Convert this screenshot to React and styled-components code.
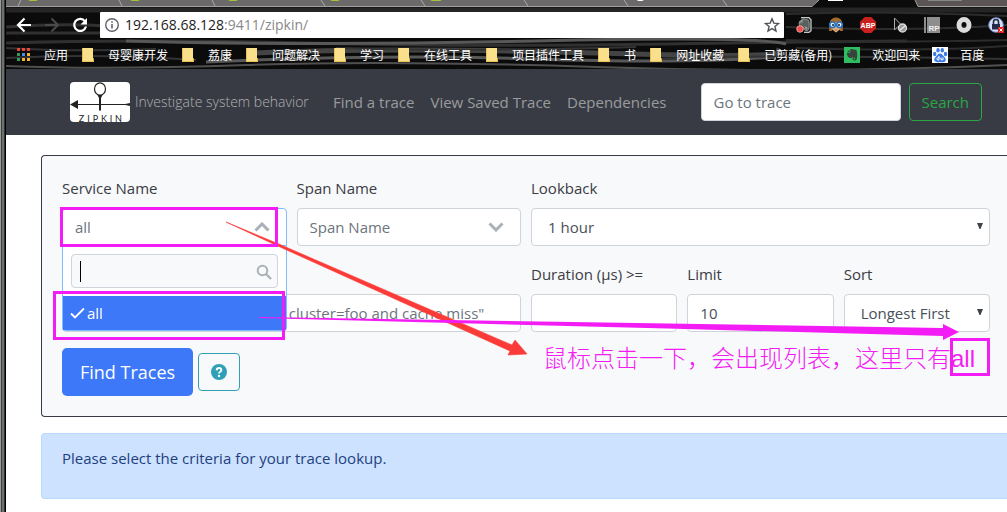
import React from "react";
import styled, { createGlobalStyle, css } from "styled-components";

const GlobalStyle = createGlobalStyle`
  *, *::before, *::after { box-sizing: border-box; }
  body {
    margin: 0;
    background: #fff;
    color: #3a3c44;
    font: 15px/24px "Open Sans", "Noto Sans", "Noto Sans CJK SC", sans-serif;
    overflow-x: hidden;
  }
  button, input, select { font: inherit; color: inherit; margin: 0; }
`;

const Frame = styled.div`
  position: relative;
  min-height: 100vh;
  padding-left: 6px;
  background: linear-gradient(to right, #9a9c9a 0 1px, #3c403e 1px 2px, #6d706e 2px 4px, #333 4px 5px, #000 5px 6px) left / 6px 100% no-repeat, #fff;
  overflow: hidden;
`;

/* ---------- browser chrome ---------- */

const Chrome = styled.header`
  position: relative;
  isolation: isolate;
  background: #0b0b0b;
  color: #fff;
`;

const Grain = styled.svg`
  position: absolute;
  inset: 0;
  width: 100%;
  height: 100%;
  z-index: -1;
`;

const TabStrip = styled.div`
  height: 7px;
`;

const Toolbar = styled.div`
  display: flex;
  align-items: center;
  height: 35px;
  padding: 0 3px 0 10px;
  gap: 12px;
`;

const IconButton = styled.button`
  display: flex;
  width: 16px;
  height: 16px;
  flex: none;
  padding: 0;
  border: 0;
  background: none;
  color: ${(p) => (p.disabled ? "#4a4a4a" : "#fff")};
  svg { width: 16px; height: 16px; overflow: visible; }
`;

const AddressBar = styled.div`
  display: flex;
  align-items: center;
  flex: 1;
  height: 26px;
  padding: 0 4px;
  gap: 5px;
  background: #fff;
  color: #888;
  font-size: 14px;
  border-radius: 1px;
  span { flex: 1; }
  b { font-weight: 400; color: #222; }
  svg { width: 16px; height: 16px; flex: none; }
`;

const Extensions = styled.div`
  display: flex;
  gap: 16px;
`;

const Bookmarks = styled.nav`
  display: flex;
  align-items: center;
  height: 27px;
  padding: 0 0 2px 10px;
  gap: 12px;
  white-space: nowrap;
`;

const Bookmark = styled.a`
  display: flex;
  align-items: center;
  gap: 12px;
  color: #fff;
  font: 12px/16px "Noto Sans CJK SC", sans-serif;
  text-decoration: none;
  svg { width: 16px; height: 16px; }
`;

/* ---------- zipkin navbar ---------- */

const Navbar = styled.nav`
  display: flex;
  align-items: center;
  height: 66px;
  padding: 0 25px 0 64px;
  background: #393b44;
  color: #9a9b9f;
  white-space: nowrap;
`;

const Logo = styled.svg`
  width: 60px;
  height: 40px;
  flex: none;
  border-radius: 4px;
  background: #fff;
`;

const Tagline = styled.span`
  width: 203px;
  padding-left: 5px;
  color: #b0b1b5;
  font-size: 14px;
  font-weight: 300;
`;

const NavLinks = styled.div`
  display: flex;
  gap: 16px;
`;

const NavLink = styled.a`
  color: inherit;
  text-decoration: none;
`;

const TraceForm = styled.form`
  display: flex;
  gap: 8px;
  margin-left: auto;
`;

const control = css`
  width: 100%;
  height: 38px;
  border: 1px solid #ced4da;
  border-radius: 4px;
  background: #fff;
  color: #495057;
`;

const TextInput = styled.input`
  ${control}
  padding: 4px 12px;
  &::placeholder { color: #6c757d; opacity: 1; }
`;

const TraceInput = styled(TextInput)`
  width: 200px;
`;

const QueryInput = styled(TextInput)`
  padding: 4px 20px;
`;

const SearchButton = styled.button`
  height: 38px;
  padding: 0 12px;
  border: 1px solid #28a745;
  border-radius: 4px;
  background: transparent;
  color: #28a745;
`;

/* ---------- search panel ---------- */

const Main = styled.main`
  display: flex;
  flex-direction: column;
  gap: 16px;
  padding: 20px 0 12px 35px;
`;

const Panel = styled.form`
  display: flex;
  flex-direction: column;
  gap: 16px;
  padding: 20px 17px 20px 20px;
  border: 1px solid #393b44;
  border-right: 0;
  border-radius: 4px 0 0 4px;
  background: #f8f9fb;
`;

const Row = styled.div`
  display: grid;
  grid-template-columns: repeat(${(p) => p.$count}, minmax(0, 1fr));
  gap: 10px;
`;

const Field = styled.div`
  position: relative;
  grid-column: span ${(p) => p.$span || 1};
`;

const Label = styled.label`
  display: block;
  margin-bottom: 8px;
`;

const PickerButton = styled.button`
  ${control}
  display: flex;
  align-items: center;
  justify-content: space-between;
  padding: 0 16px 0 12px;
  color: #6c757d;
  text-align: left;
  ${(p) => p.$open && css`
    border-color: #80bdff;
    border-radius: 4px 4px 0 0;
  `}
  svg { width: 16px; height: 10px; }
`;

const Menu = styled.div`
  position: absolute;
  top: 100%;
  left: 0;
  right: 0;
  z-index: 2;
  border: 1px solid #80bdff;
  border-top: 0;
  border-radius: 0 0 4px 4px;
  background: #fff;
`;

const MenuSearch = styled.div`
  position: relative;
  padding: 8px;
  input { height: 34px; background: #f8f9fa; padding: 0 8px; }
  svg { position: absolute; right: 14px; top: 18px; width: 16px; height: 16px; }
`;

const Caret = styled.span`
  position: absolute;
  left: 17px;
  top: 15px;
  width: 1px;
  height: 21px;
  background: #000;
`;

const MenuOption = styled.div`
  display: flex;
  align-items: center;
  height: 34px;
  padding: 0 7px;
  gap: 2px;
  background: #3c78f8;
  color: #fff;
  svg { width: 15px; height: 12px; }
`;

const SelectBox = styled.div`
  position: relative;
  select {
    ${control}
    appearance: none;
    padding: 0 20px 0 16px;
  }
  svg {
    position: absolute;
    right: 7px;
    top: 15px;
    width: 6px;
    height: 7px;
    pointer-events: none;
  }
`;

const Actions = styled.div`
  display: flex;
  align-items: center;
  gap: 5px;
`;

const FindButton = styled.button`
  height: 48px;
  padding: 0 18px;
  border: 0;
  border-radius: 5px;
  background: #3c78f8;
  color: #fff;
  font-size: 18px;
`;

const HelpButton = styled.button`
  display: flex;
  align-items: center;
  justify-content: center;
  width: 42px;
  height: 38px;
  padding: 0;
  border: 1px solid #2fa0b5;
  border-radius: 4px;
  background: transparent;
  svg { width: 16px; height: 16px; }
`;

const Notice = styled.div`
  height: 66px;
  padding: 12px 20px;
  border: 1px solid #b8daff;
  border-right: 0;
  border-radius: 4px 0 0 4px;
  background: #cce2ff;
  color: #1f3f80;
`;

/* ---------- annotations drawn over the page ---------- */

const Markup = styled.svg`
  position: absolute;
  left: 0;
  top: 0;
  width: 1007px;
  height: 512px;
  z-index: 5;
  pointer-events: none;
`;

const MarkupText = styled.p`
  position: absolute;
  left: 543px;
  top: 343px;
  z-index: 5;
  margin: 0;
  color: #f41cf4;
  font: 300 24px/32px "Liberation Sans", "Noto Sans CJK SC", sans-serif;
  white-space: nowrap;
`;

const FolderIcon = () => (
  <svg viewBox="0 0 16 16" aria-hidden="true">
    <path d="M2 1h11v10l1 1v3H2z" fill="#fbe08c" />
    <path d="M13 11v4h1v-3z" fill="#e0b440" />
    <path d="M2 14.5h12M2.5 1v14" stroke="#e8c254" fill="none" />
  </svg>
);

const APP_COLORS = ["#e8453c", "#e8453c", "#e8453c", "#2f9e58", "#4a8af4", "#f7b529", "#2f9e58", "#f7b529", "#f7b529"];
const AppsIcon = () => (
  <svg viewBox="0 0 16 16" aria-hidden="true">
    {APP_COLORS.map((c, i) => (
      <rect key={i} x={1 + (i % 3) * 5} y={1 + Math.floor(i / 3) * 5} width="3" height="3" fill={c} />
    ))}
  </svg>
);

const ELEPHANT = "M6.3 2.3c1-.6 2.200-.4 2.800.3 1.500.1 3 .1 3.500.8.6 1.600.9 5.300.3 8.200-.3 1.500-1.200 2.100-2.600 2-1.500-.1-2.100-1-1.900-2 .2-.9 1-1.300 2-1.100v.9c-.6 0-.9.2-.9.6 0 .5.5.7 1.100.5.6-.2.5-1 .4-1.700-.8-.3-1.600-.4-2.400-.9-.6 1.100-1.900 1.200-3.300.8C3.700 10.200 3 8 3 5.700h2.600c.5 0 .7-.2.7-.7zM5.500 2.800v2.100H3.200z";

const EvernoteIcon = () => (
  <svg viewBox="0 0 16 16" aria-hidden="true">
    <rect width="16" height="16" fill="#2dbe60" />
    <path d={ELEPHANT} fill="#37433c" />
  </svg>
);

const BaiduIcon = () => (
  <svg viewBox="0 0 16 16" aria-hidden="true">
    <rect width="16" height="16" fill="#fff" />
    <g fill="#3b7be8">
      <ellipse cx="2.700" cy="7" rx="1.700" ry="2.200" />
      <ellipse cx="6" cy="3.300" rx="1.700" ry="2.300" />
      <ellipse cx="10.300" cy="3.300" rx="1.700" ry="2.300" />
      <ellipse cx="13.500" cy="7" rx="1.700" ry="2.200" />
      <path d="M8 6.500c2 0 2.600 1.800 4 3.100 1.800 1.600 2.100 2.800 1.500 4.200-.8 1.700-3 1.600-5.500 1.200-2.500.4-4.700.5-5.500-1.200-.6-1.400-.3-2.600 1.500-4.200C5.400 8.300 6 6.500 8 6.500z" />
    </g>
    <path d="M7 9v4H5.500q-1-1.500.2-2.300H7M9 10.500v2.200h2v-2.200" fill="none" stroke="#fff" />
  </svg>
);

const BOOKMARKS = [
  ["应用", AppsIcon], ["母婴康开发"], ["荔康"], ["问题解决"], ["学习"], ["在线工具"],
  ["项目插件工具"], ["书"], ["网址收藏"], ["已剪藏(备用)"], ["欢迎回来", EvernoteIcon], ["百度", BaiduIcon],
];

const EXTENSIONS = [
  ["Clipper", (
    <g>
      <path d="M5 .7h8l2 2v11l-2 1.600H8" fill="#1c201f" stroke="#c4c8c6" strokeWidth="1.300" />
      <path d={ELEPHANT} fill="#56605c" stroke="#c4c8c6" strokeWidth=".6" />
      <circle cx="4" cy="12" r="3.300" fill="#f04c4c" stroke="#f0b0b0" strokeWidth=".8" />
    </g>
  )],
  ["Goggles", (
    <g>
      <path d="M2 5c1-6 11-6 12 0l1 9h-3V8H4v6H1z" fill="#a56a2c" />
      <path d="M3.500 5.500h9V12L8 15.500 3.500 12z" fill="#edb77b" />
      <circle cx="4.500" cy="7.800" r="2.800" fill="#dcecff" stroke="#2d72bd" strokeWidth="1.600" />
      <circle cx="11.500" cy="7.800" r="2.800" fill="#dcecff" stroke="#2d72bd" strokeWidth="1.600" />
      <circle cx="5" cy="8" r="1" fill="#123" /><circle cx="11" cy="8" r="1" fill="#123" />
      <path d="M6.500 13h3" stroke="#b0603c" />
    </g>
  )],
  ["Adblock", (
    <g>
      <path d="M4.700 0h6.600L16 4.700v6.600L11.300 16H4.700L0 11.300V4.700z" fill="#c9211e" />
      <text x="8" y="10.600" fill="#fff" fontSize="7" fontWeight="700" fontFamily="Liberation Sans, sans-serif" textAnchor="middle">ABP</text>
    </g>
  )],
  ["Pointer", (
    <g fill="none" stroke="#aaa">
      <path d="M2.500 1v12l3-3 4-2z" fill="#111" />
      <circle cx="10.500" cy="11" r="4" fill="#999" stroke="#ddd" strokeWidth="1.300" />
      <path d="M7.500 13.500l6-5" stroke="#eee" strokeWidth="1.300" />
    </g>
  )],
  ["Axure", (
    <g>
      <path d="M0 0h2v16H0zM3 0h13v16H3z" fill="#8e8e8e" />
      <text x="10" y="14" fill="#eee" fontSize="8" fontWeight="700" fontFamily="Liberation Sans, sans-serif" textAnchor="middle">RP</text>
    </g>
  )],
  ["Ring", <ellipse cx="8" cy="8" rx="5" ry="5.500" fill="none" stroke="#dcdcdc" strokeWidth="5" />],
  ["Lock", (
    <g>
      <circle cx="8" cy="8" r="7.300" fill="#d8e0f4" stroke="#6b84c4" />
      <path d="M5.500 7V5q0-2.500 2.500-2.500T10.500 5v2" fill="none" stroke="#222b4a" strokeWidth="1.600" />
      <rect x="4" y="7" width="8" height="5.500" fill="#222b4a" />
      <path d="M10 10h6v6h-6z" fill="#e02020" />
      <path d="M11.500 11.500l3 3m0-3l-3 3" stroke="#fff" />
    </g>
  )],
];

const DownTriangle = () => (
  <svg viewBox="0 0 6 7" aria-hidden="true"><path d="M0 0h6L3.500 6h-1z" fill="#40444a" /></svg>
);

const Chevron = ({ up }) => (
  <svg viewBox="0 0 16 10" aria-hidden="true">
    <path d={up ? "M1.500 8.500L8 2l6.500 6.500" : "M1.500 1.500L8 8l6.500-6.500"} fill="none" stroke="#a9b0b8" strokeWidth="3" />
  </svg>
);

function BrowserChrome() {
  return (
    <Chrome>
      <Grain viewBox="0 0 1001 69" preserveAspectRatio="none" aria-hidden="true">
        <g fill="none">
          <path d="M0 10H1001" stroke="#252525" strokeWidth="5" />
          <path d="M0 27q60-4 100-1M0 33h96M0 43q130-4 300 0t360 1 241-3" stroke="#303030" strokeWidth="3" />
          <path d="M120 41q190 5 410 0t250 3M200 62q180-8 330-3t240-2" stroke="#585858" strokeWidth="3" />
          <path d="M250 53q130-6 340 0t180-3" stroke="#444" strokeWidth="5" />
          <path d="M0 48q70 4 150 1M0 58q90-5 190 2M330 48q130 4 300-1M650 59q100-5 351 0" stroke="#333" strokeWidth="2" />
          <path d="M780 14q90-4 221 2M780 27q130 5 221-2M780 40q90 3 221 0M790 48q130 4 211-2" stroke="#2c2c2c" strokeWidth="2" />
          <path d="M0 66q100 4 240-1t350 2 411-2" stroke="#505050" strokeWidth="2" />
        </g>
        <path d="M0 0H813l-7 6H0z" fill="#6b6969" />
        <path d="M1001 0H915l-6 0 3 6h89z" fill="#5c5555" />
        <path d="M0 6.500H806L813 0M909 0l3 6.500h89" stroke="#a0a0a0" fill="none" />
        <path d="M12 6l3-6M113 0l3 6M206 0l3 6M315 0l4 6M415 0l4 6M518 0l4 6M618 0l4 6M717 0l4 6" stroke="#aaa" fill="none" />
        <path d="M22 0h10l-2 1h-6zM124 0h10l-2 1h-6zM222 0h10l-2 1h-6zM324 0h10l-2 1h-6zM424 0h12l-2 1h-8z" fill="#a2c437" />
        <path d="M631 0h7l-2 1h-4zM822 0h15v1h-15z" fill="#fff" />
        <path d="M922 0h34v1h-34z" fill="#888" />
      </Grain>
      <TabStrip />
      <Toolbar>
        <IconButton aria-label="Back">
          <svg viewBox="0 0 16 16"><path d="M15 8H2.500M8.500 1.500L2 8l6.500 6.500" fill="none" stroke="currentColor" strokeWidth="2.200" /></svg>
        </IconButton>
        <IconButton aria-label="Forward" disabled>
          <svg viewBox="0 0 16 16"><path d="M1 8h12.500M7.500 1.500L14 8l-6.500 6.500" fill="none" stroke="currentColor" strokeWidth="2" /></svg>
        </IconButton>
        <IconButton aria-label="Reload">
          <svg viewBox="0 0 16 16">
            <path d="M13 4.300A6 6 0 1 0 14 9.500" fill="none" stroke="currentColor" strokeWidth="2.200" />
            <path d="M15 1v6.500H8.500z" fill="currentColor" />
          </svg>
        </IconButton>
        <AddressBar>
          <svg viewBox="0 0 16 16" aria-hidden="true">
            <circle cx="8" cy="8" r="6.300" fill="none" stroke="#5f6368" strokeWidth="1.400" />
            <path d="M8 7v4.500M8 4.300v1.500" stroke="#5f6368" strokeWidth="1.600" />
          </svg>
          <span><b>192.168.68.128</b>:9411/zipkin/</span>
          <svg viewBox="0 0 16 16" aria-hidden="true">
            <path d="M8 1.800l1.800 4.300 4.700.4-3.600 3 1.100 4.600L8 11.600l-4 2.500 1.100-4.600-3.600-3 4.700-.4z" fill="none" stroke="#505357" strokeWidth="1.400" />
          </svg>
        </AddressBar>
        <Extensions>
          {EXTENSIONS.map(([name, art]) => (
            <IconButton key={name} aria-label={name}><svg viewBox="0 0 16 16">{art}</svg></IconButton>
          ))}
        </Extensions>
      </Toolbar>
      <Bookmarks>
        {BOOKMARKS.map(([name, Icon = FolderIcon]) => (
          <Bookmark key={name} href="#"><Icon />{name}</Bookmark>
        ))}
      </Bookmarks>
    </Chrome>
  );
}

function ZipkinNav() {
  return (
    <Navbar>
      <Logo viewBox="0 0 60 40" role="img" aria-label="Zipkin">
        <ellipse cx="30" cy="7" rx="5.500" ry="6.200" fill="none" stroke="#222" strokeWidth="1.200" />
        <path d="M27.500 13h5l-1.500 3v12.500h-2V16z" fill="#222" />
        <path d="M5 22.500h50" stroke="#222" strokeWidth="1" />
        <path d="M0 22.500L8 18v9zM60 21l-7 1.500L60 24z" fill="#222" />
        <g fill="#222" fontFamily="Lato, sans-serif" fontSize="9" textAnchor="middle">
          <text x="11.500" y="39.500">Z</text><text x="18.500" y="39.500">I</text><text x="25.500" y="39.500">P</text>
          <text x="34" y="39.500">K</text><text x="41" y="39.500">I</text><text x="48.500" y="39.500">N</text>
        </g>
      </Logo>
      <Tagline>Investigate system behavior</Tagline>
      <NavLinks>
        <NavLink href="#">Find a trace</NavLink>
        <NavLink href="#">View Saved Trace</NavLink>
        <NavLink href="#">Dependencies</NavLink>
      </NavLinks>
      <TraceForm>
        <TraceInput aria-label="Go to trace" placeholder="Go to trace" />
        <SearchButton type="button">Search</SearchButton>
      </TraceForm>
    </Navbar>
  );
}

function SearchPanel() {
  return (
    <Panel>
      <Row $count={4}>
        <Field>
          <Label htmlFor="service">Service Name</Label>
          <PickerButton id="service" type="button" $open aria-expanded="true">all<Chevron up /></PickerButton>
          <Menu>
            <MenuSearch>
              <TextInput aria-label="Filter services" />
              <Caret />
              <svg viewBox="0 0 16 16" aria-hidden="true">
                <circle cx="6.500" cy="6.500" r="4.800" fill="none" stroke="#a9b0b8" strokeWidth="2" />
                <path d="M10 10l5 5" stroke="#a9b0b8" strokeWidth="2.300" />
              </svg>
            </MenuSearch>
            <MenuOption role="option" aria-selected="true">
              <svg viewBox="0 0 15 12" aria-hidden="true"><path d="M1 6.500L5 10.500 14 1.500" fill="none" stroke="#fff" strokeWidth="1.800" /></svg>
              all
            </MenuOption>
          </Menu>
        </Field>
        <Field>
          <Label htmlFor="span">Span Name</Label>
          <PickerButton id="span" type="button">Span Name<Chevron /></PickerButton>
        </Field>
        <Field $span={2}>
          <Label htmlFor="lookback">Lookback</Label>
          <SelectBox>
            <select id="lookback"><option>1 hour</option></select>
            <DownTriangle />
          </SelectBox>
        </Field>
      </Row>
      <Row $count={2}>
        <Field>
          <Label htmlFor="query">Annotations Query</Label>
          <QueryInput id="query" placeholder={'e.g. "http.path=/foo/bar/ and cluster=foo and cache.miss"'} />
        </Field>
        <Row $count={3}>
          <Field>
            <Label htmlFor="duration">Duration (μs) &gt;=</Label>
            <TextInput id="duration" />
          </Field>
          <Field>
            <Label htmlFor="limit">Limit</Label>
            <TextInput id="limit" defaultValue="10" />
          </Field>
          <Field>
            <Label htmlFor="sort">Sort</Label>
            <SelectBox>
              <select id="sort"><option>Longest First</option></select>
              <DownTriangle />
            </SelectBox>
          </Field>
        </Row>
      </Row>
      <Actions>
        <FindButton type="button">Find Traces</FindButton>
        <HelpButton type="button" aria-label="Help">
          <svg viewBox="0 0 16 16">
            <circle cx="8" cy="8" r="8" fill="#2fa0b5" />
            <path d="M5.600 6.300Q5.800 4 8 4t2.400 2.100Q10.400 7.300 9 8 8 8.500 8 9.600" fill="none" stroke="#fff" strokeWidth="1.900" />
            <circle cx="8" cy="12" r="1.200" fill="#fff" />
          </svg>
        </HelpButton>
      </Actions>
    </Panel>
  );
}

export default function App() {
  return (
    <Frame>
      <GlobalStyle />
      <BrowserChrome />
      <ZipkinNav />
      <Main>
        <SearchPanel />
        <Notice>Please select the criteria for your trace lookup.</Notice>
      </Main>
      <Markup viewBox="0 0 1007 512" aria-hidden="true">
        <path d="M226 222L280 244.500 512 345l3-5 12 14-19 1 2-4L280 247z" fill="#fb3b38" stroke="#fb3b38" strokeWidth=".6" />
        <path d="M259 317L943 328v-4l16 8-16 8v-4L667 328.500 259 318z" fill="#f41cf4" />
        <g fill="none" stroke="#f41cf4" strokeWidth="3">
          <rect x="61.500" y="208.500" width="215" height="37" />
          <rect x="54.500" y="292.500" width="229" height="46" />
          <rect x="951.500" y="339.500" width="37" height="35" />
        </g>
      </Markup>
      <MarkupText>鼠标点击一下，会出现列表，这里只有all</MarkupText>
    </Frame>
  );
}
